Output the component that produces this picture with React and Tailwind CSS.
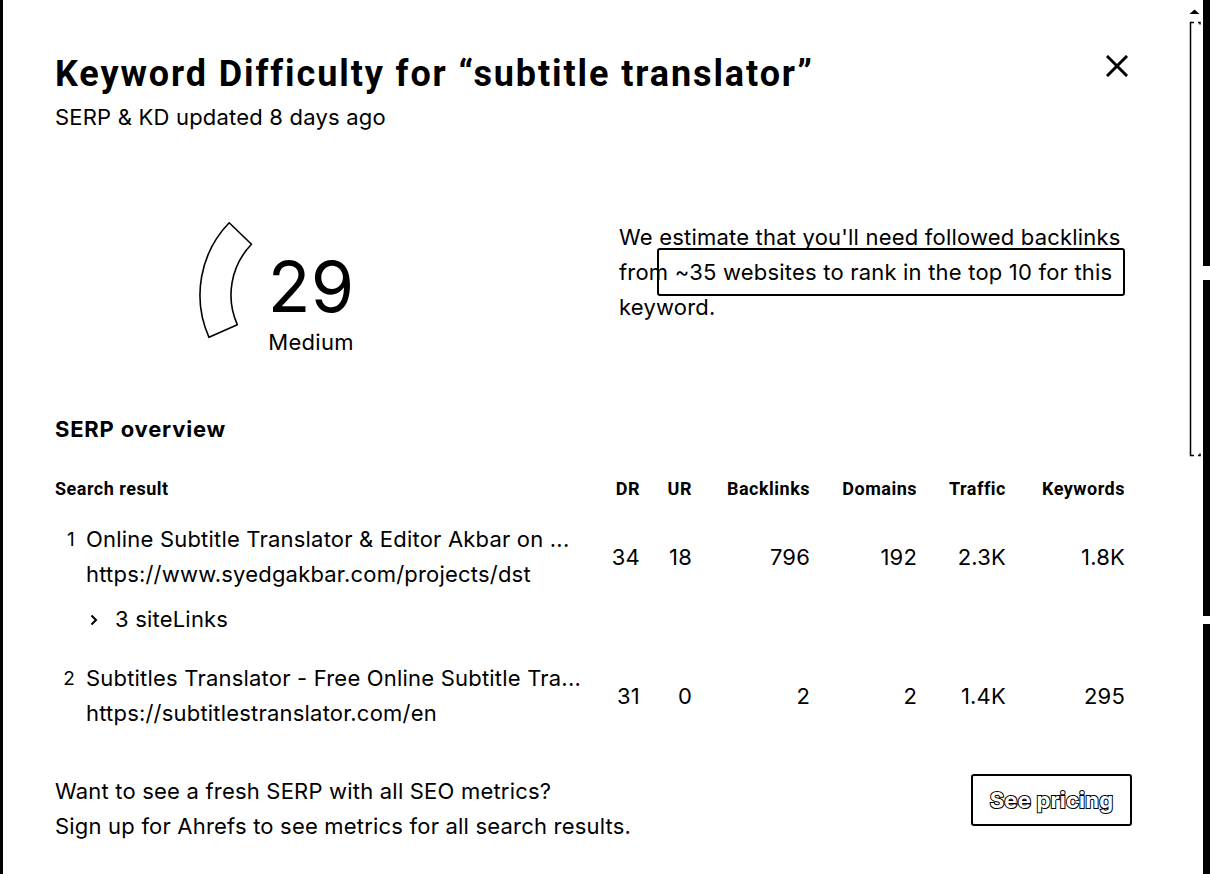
import React from 'react';

const rows = [
    {
        n: 1,
        title: 'Online Subtitle Translator & Editor Akbar on ...',
        url: 'https://www.syedgakbar.com/projects/dst',
        siteLinks: 3,
        values: ['34', '18', '796', '192', '2.3K', '1.8K'],
    },
    {
        n: 2,
        title: 'Subtitles Translator - Free Online Subtitle Tra...',
        url: 'https://subtitlestranslator.com/en',
        values: ['31', '0', '2', '2', '1.4K', '295'],
    },
];

const headers = ['DR', 'UR', 'Backlinks', 'Domains', 'Traffic', 'Keywords'];

const arcPath = (cx, cy, r1, r2, a1, a2) => {
    const pt = (r, a) => {
        const rad = (a * Math.PI) / 180;
        return [cx + r * Math.cos(rad), cy - r * Math.sin(rad)];
    };
    const [x1, y1] = pt(r2, a1);
    const [x2, y2] = pt(r2, a2);
    const [x3, y3] = pt(r1, a2);
    const [x4, y4] = pt(r1, a1);
    return `M${x1} ${y1} A${r2} ${r2} 0 0 0 ${x2} ${y2} L${x3} ${y3} A${r1} ${r1} 0 0 1 ${x4} ${y4} Z`;
};

const Gauge = () => (
    <div className="relative w-[220px] h-[220px]">
        <svg width="220" height="220" viewBox="0 0 220 220" className="absolute inset-0">
            <path d={arcPath(110, 110, 73, 104, 136, 204)} fill="white" stroke="black" strokeWidth="1.6" strokeLinejoin="round" />
        </svg>
        <div className="absolute inset-x-0 top-[67px] flex flex-col items-center pl-[14px]">
            <div className="text-[70px] leading-[70px] font-normal text-black">29</div>
            <div className="mt-[6px] text-[22px] leading-[28px] tracking-[0.3px] text-black">Medium</div>
        </div>
    </div>
);

const Scrollbar = () => (
    <svg width="23" height="460" viewBox="0 0 23 460">
        <path d="M9.5 14 L14.5 9.5 L19.5 14 Z" fill="black" />
        <path d="M14 22.5 H10.5 V455.5 H14" fill="none" stroke="black" strokeWidth="1.5" />
        <path d="M18 22.5 H20 V24.5 M18 455.5 H20 V453.5" fill="none" stroke="black" strokeWidth="1.5" />
    </svg>
);

const App = () => {
    return (
        <div className="flex h-[874px] w-[1210px] overflow-hidden bg-white font-['Inter','Liberation_Sans',sans-serif] tracking-[0.2px] text-black">
            <div className="w-[3px] shrink-0 bg-black" />

            <div className="flex-1 pl-[52px] pr-[55px] pt-[54px]">
                <div className="flex items-start justify-between">
                    <h1 className="font-['Roboto','Liberation_Sans',sans-serif] text-[36px] leading-[40px] font-bold tracking-[1.9px]">
                        Keyword Difficulty for “subtitle translator”
                    </h1>
                    <button className="mt-[1px] -mr-[3px]">
                        <svg width="22" height="22" viewBox="0 0 22 22">
                            <path d="M2 2 L20 20 M20 2 L2 20" stroke="black" strokeWidth="3" strokeLinecap="square" />
                        </svg>
                    </button>
                </div>
                <p className="mt-[9px] text-[22px] leading-[28px]">SERP &amp; KD updated 8 days ago</p>

                <div className="mt-[54px] grid grid-cols-2 gap-[58px]">
                    <div className="flex justify-center pr-[8px]">
                        <Gauge />
                    </div>
                    <div className="pt-[35px]">
                        <p className="relative text-[22px] leading-[35px]">
                            We estimate that you'll need followed backlinks from ~35 websites to rank in the top 10 for this keyword.
                            <span className="absolute left-[38px] top-[28px] h-[48px] w-[468px] rounded-[3px] border-2 border-black" />
                        </p>
                    </div>
                </div>

                <h2 className="mt-[7px] text-[22px] leading-[35px] font-bold tracking-[0.8px]">SERP overview</h2>

                <div className="mt-[30px] grid grid-cols-[1fr_38px_52px_118px_107px_89px_119px] font-['Roboto','Liberation_Sans',sans-serif] text-[18px] leading-[24px] font-bold tracking-[0.5px]">
                    <div>Search result</div>
                    {headers.map(h => (
                        <div key={h} className="text-right">{h}</div>
                    ))}
                </div>

                <div className="mt-[21px] flex flex-col gap-[24px]">
                    {rows.map(row => (
                        <div key={row.n} className="grid grid-cols-[1fr_38px_52px_118px_107px_89px_119px] items-start text-[22px] leading-[35px]">
                            <div>
                                <div className="flex">
                                    <span className="w-[20px] text-right text-[19px]">{row.n}</span>
                                    <div className="ml-[11px] whitespace-nowrap">
                                        <div>{row.title}</div>
                                        <div>{row.url}</div>
                                    </div>
                                </div>
                                {row.siteLinks && (
                                    <div className="mt-[10px] flex items-center pl-[34px]">
                                        <svg width="10" height="12" viewBox="0 0 10 12">
                                            <path d="M2.5 1.5 L7 6 L2.5 10.5" fill="none" stroke="black" strokeWidth="2" />
                                        </svg>
                                        <span className="ml-[16px]">{row.siteLinks} siteLinks</span>
                                    </div>
                                )}
                            </div>
                            {row.values.map((v, i) => (
                                <div key={i} className="flex h-[70px] items-center justify-end">{v}</div>
                            ))}
                        </div>
                    ))}
                </div>

                <div className="mt-[43px] flex items-start justify-between">
                    <div className="text-[22px] leading-[35px]">
                        <p>Want to see a fresh SERP with all SEO metrics?</p>
                        <p>Sign up for Ahrefs to see metrics for all search results.</p>
                    </div>
                    <button className="-mr-[7px] h-[52px] w-[161px] rounded-[3px] border-2 border-black text-[22px] font-bold text-white [-webkit-text-stroke:2px_black] [paint-order:stroke_fill]">
                        See pricing
                    </button>
                </div>
            </div>

            <div className="w-[23px] shrink-0">
                <Scrollbar />
            </div>

            <div className="flex w-[7px] shrink-0 flex-col">
                <div className="h-[266px] bg-black" />
                <div className="h-[14px] bg-white" />
                <div className="h-[336px] bg-black" />
                <div className="h-[8px] bg-white" />
                <div className="flex-1 bg-black" />
            </div>
        </div>
    );
};

export default App;
